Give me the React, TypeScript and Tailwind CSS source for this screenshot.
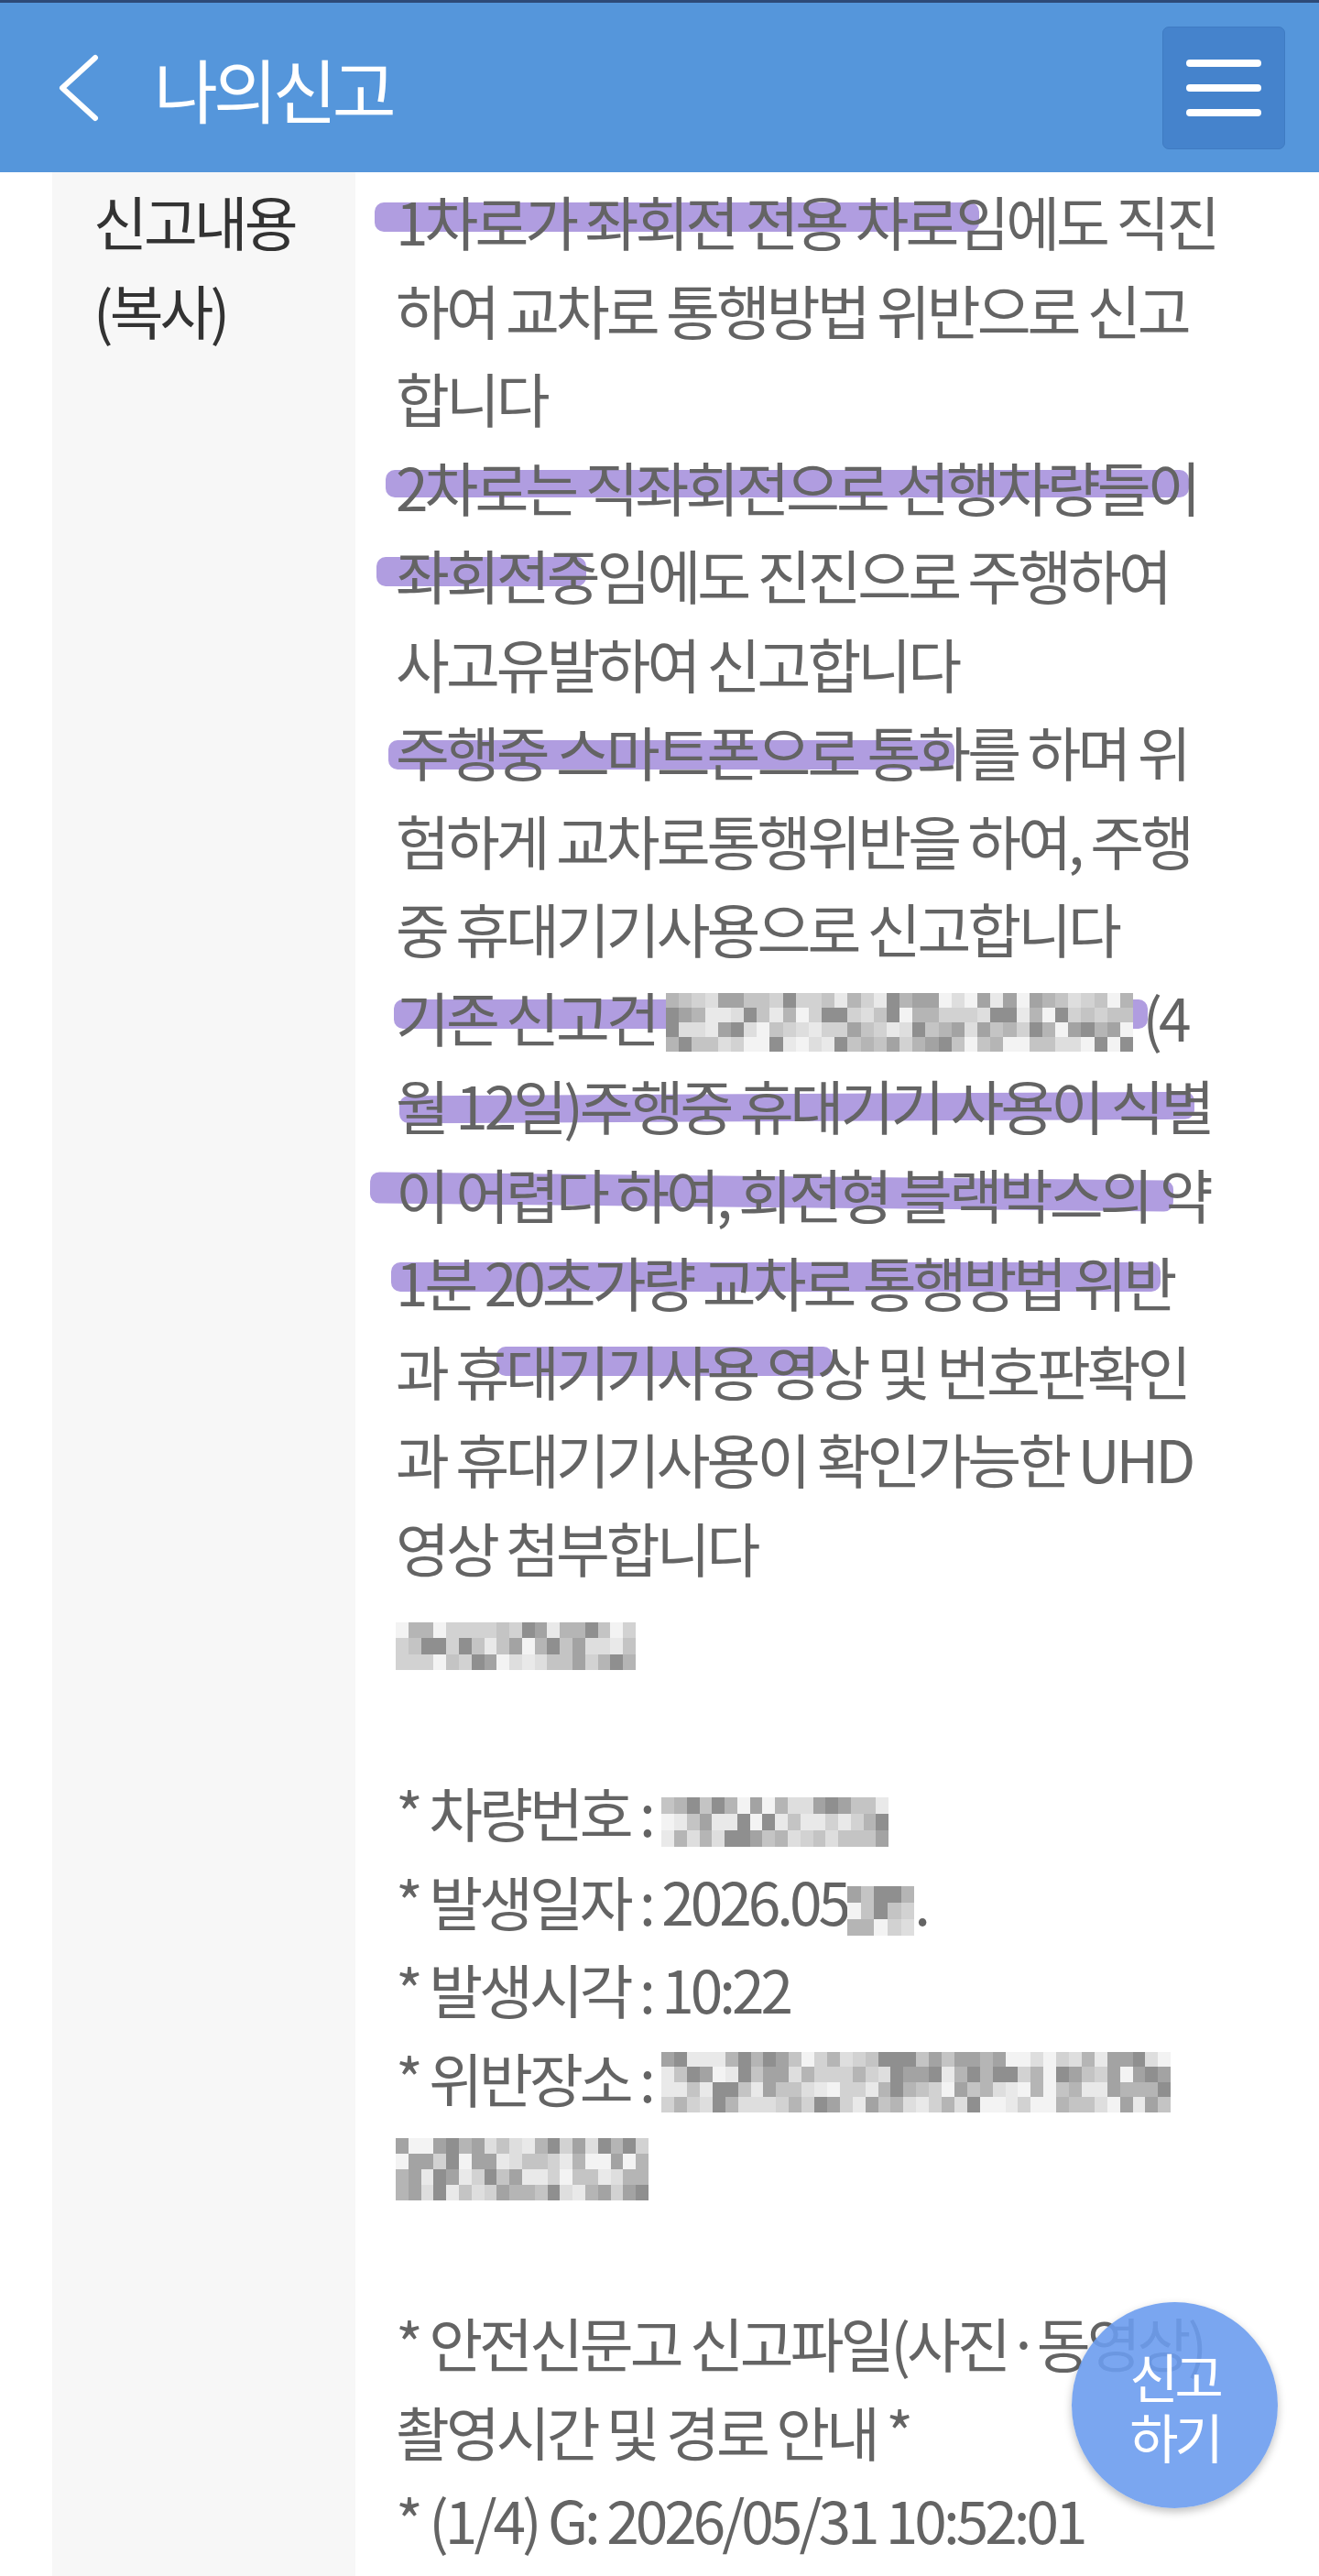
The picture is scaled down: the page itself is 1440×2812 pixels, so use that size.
import React from "react";

type Piece = string | { blur: number; h: number; seed: number };

const GRAYS = [
  "bg-[#8f8f8f]",
  "bg-[#a3a3a3]",
  "bg-[#b5b5b5]",
  "bg-[#c4c4c4]",
  "bg-[#d2d2d2]",
  "bg-[#dedede]",
  "bg-[#e9e9e9]",
  "bg-[#f3f3f3]",
];

function Mosaic({ w, h, seed }: { w: number; h: number; seed: number }) {
  const cols = Math.max(1, Math.round(w / 14));
  const rows = Math.max(1, Math.round(h / 16));
  const cells = [];
  for (let i = 0; i < cols * rows; i++) {
    const n = Math.abs(Math.sin((i + 1) * 12.9898 + seed * 78.233) * 43758.5453);
    const idx = Math.floor((n - Math.floor(n)) * GRAYS.length);
    cells.push(<span key={i} className={GRAYS[idx]} />);
  }
  return (
    <span className="inline-block overflow-hidden align-[-11px]" style={{ width: w, height: h }}>
      <span
        className="grid w-full h-full"
        style={{ gridTemplateColumns: `repeat(${cols}, 1fr)`, gridTemplateRows: `repeat(${rows}, 1fr)` }}
      >
        {cells}
      </span>
    </span>
  );
}

const lines: Piece[][] = [
  ["1차로가 좌회전 전용 차로임에도 직진"],
  ["하여 교차로 통행방법 위반으로 신고"],
  ["합니다"],
  ["2차로는 직좌회전으로 선행차량들이"],
  ["좌회전중임에도 진진으로 주행하여"],
  ["사고유발하여 신고합니다"],
  ["주행중 스마트폰으로 통화를 하며 위"],
  ["험하게 교차로통행위반을 하여, 주행"],
  ["중 휴대기기사용으로 신고합니다"],
  ["기존 신고건 ", { blur: 510, h: 64, seed: 1 }, " (4"],
  ["월 12일)주행중 휴대기기 사용이 식별"],
  ["이 어렵다 하여, 회전형 블랙박스의 약"],
  ["1분 20초가량 교차로 통행방법 위반"],
  ["과 휴대기기사용 영상 및 번호판확인"],
  ["과 휴대기기사용이 확인가능한 UHD"],
  ["영상 첨부합니다"],
  [{ blur: 262, h: 52, seed: 2 }],
  [""],
  ["* 차량번호 : ", { blur: 248, h: 54, seed: 3 }],
  ["* 발생일자 : 2026.05", { blur: 73, h: 54, seed: 4 }, "."],
  ["* 발생시각 : 10:22"],
  ["* 위반장소 : ", { blur: 556, h: 66, seed: 5 }],
  [{ blur: 276, h: 68, seed: 6 }],
  [""],
  ["* 안전신문고 신고파일(사진·동영상)"],
  ["촬영시간 및 경로 안내 *"],
  ["* (1/4) G: 2026/05/31 10:52:01"],
];

// marker strokes, relative to the text column
const marks = [
  { l: 21, t: 33, w: 660, h: 32, r: 0 },
  { l: 33, t: 325, w: 877, h: 30, r: 0 },
  { l: 23, t: 420, w: 229, h: 32, r: 0 },
  { l: 36, t: 620, w: 618, h: 32, r: 0 },
  { l: 42, t: 903, w: 823, h: 32, r: 0 },
  { l: 48, t: 1006, w: 868, h: 30, r: -0.3 },
  { l: 16, t: 1096, w: 877, h: 34, r: 0.6 },
  { l: 39, t: 1190, w: 840, h: 32, r: 0 },
  { l: 154, t: 1282, w: 367, h: 32, r: 0 },
];

function Header() {
  return (
    <header className="h-[188px] shrink-0 bg-[#5596db] border-t-[3px] border-[#2d4a78] flex items-center justify-between pl-[62px] pr-[37px]">
      <div className="flex items-center gap-[58px]">
        <svg width="48" height="74" viewBox="0 0 48 74" fill="none">
          <path d="M42 4 L6 37 L42 70" stroke="white" strokeWidth="6" strokeLinecap="round" strokeLinejoin="round" />
        </svg>
        <h1 className="text-white text-[76px] leading-none tracking-[-5px]">나의신고</h1>
      </div>
      <button className="w-[134px] h-[134px] rounded-[7px] bg-[#4583cc] border border-[#3f7bc2] flex flex-col items-center justify-center gap-[19px]">
        <span className="block w-[82px] h-[8px] rounded-full bg-white" />
        <span className="block w-[82px] h-[8px] rounded-full bg-white" />
        <span className="block w-[82px] h-[8px] rounded-full bg-white" />
      </button>
    </header>
  );
}

export default function App() {
  return (
    <div className="relative w-[1440px] min-h-[2812px] flex flex-col bg-white overflow-hidden font-['Noto_Sans_CJK_KR',sans-serif]">
      <Header />
      <main className="flex flex-1 pl-[57px]">
        <div className="w-[331px] shrink-0 bg-[#f7f7f7] pl-[45px] pt-[4px] text-[64px] leading-[96.5px] tracking-[-4px] text-[#333333]">
          <div>신고내용</div>
          <div>(복사)</div>
        </div>
        <div className="relative flex-1 pl-[44px] pt-[4px]">
          {marks.map((m, i) => (
            <div
              key={i}
              className="absolute rounded-[10px] bg-[#b09de0]"
              style={{ left: m.l, top: m.t, width: m.w, height: m.h, transform: `rotate(${m.r}deg)` }}
            />
          ))}
          <div className="relative text-[64px] leading-[96.5px] tracking-[-4px] text-[#646464] whitespace-pre">
            {lines.map((pieces, i) => (
              <div key={i} className="h-[96.5px]">
                {pieces.map((p, j) =>
                  typeof p === "string" ? <span key={j}>{p}</span> : <Mosaic key={j} w={p.blur} h={p.h} seed={p.seed} />
                )}
              </div>
            ))}
          </div>
        </div>
      </main>
      <button className="absolute right-[45px] top-[2513px] w-[225px] h-[225px] rounded-full bg-[#6b9cee]/90 shadow-[0_4px_10px_rgba(0,0,0,0.25)] flex flex-col items-center justify-center text-white text-[58px] leading-[66px] tracking-[-4px]">
        <span>신고</span>
        <span>하기</span>
      </button>
    </div>
  );
}
